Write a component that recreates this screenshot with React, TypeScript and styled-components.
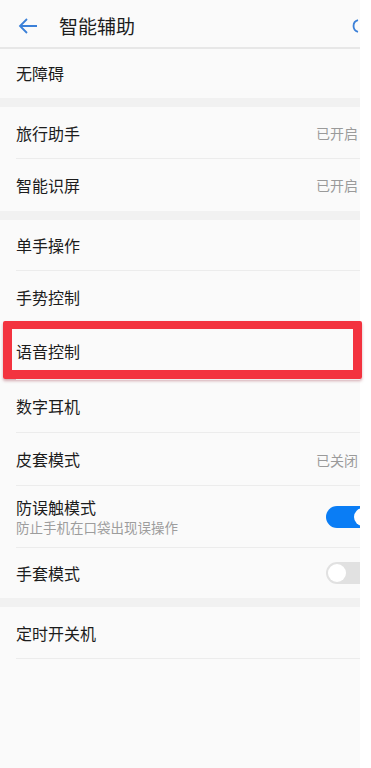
import React from 'react';
import styled, { createGlobalStyle } from 'styled-components';

const GlobalStyle = createGlobalStyle`
  html,
  body {
    margin: 0;
    padding: 0;
    background: #ffffff;
  }

  body {
    font-family: 'Noto Sans CJK SC', 'Noto Sans', sans-serif;
    color: #1c1c1c;
  }
`;

const Screen = styled.div`
  width: 360px;
  min-height: 768px;
  background: #fafafa;
`;

const Header = styled.header`
  display: flex;
  align-items: center;
  height: 43px;
  padding: 4px 0 0 18px;
  border-bottom: 2px solid #e7e7e7;
`;

const BackButton = styled.button`
  display: flex;
  padding: 0;
  border: 0;
  background: none;
  color: #3b80d8;
`;

const Title = styled.h1`
  flex: 1;
  margin: 0 0 0 21px;
  font-size: 19px;
  font-weight: 400;
  color: #1c1c1c;
`;

const Spinner = styled.svg`
  color: #3b80d8;
`;

const Section = styled.section<{ $gap?: number }>`
  & + & {
    border-top: ${({ $gap }) => $gap ?? 10}px solid #f1f1f1;
  }
`;

const Row = styled.div<{ $height?: number; $divider?: boolean }>`
  position: relative;
  display: flex;
  align-items: center;
  justify-content: space-between;
  height: ${({ $height }) => $height ?? 52}px;
  padding: 0 2px 0 16px;

  &::after {
    content: '';
    display: ${({ $divider }) => ($divider ? 'block' : 'none')};
    position: absolute;
    left: 16px;
    right: 0;
    bottom: 0;
    height: 1.5px;
    background: #ececec;
  }
`;

const Texts = styled.div`
  display: flex;
  flex-direction: column;
`;

const Label = styled.span`
  font-size: 16px;
  line-height: 21px;
  color: #1c1c1c;
`;

const Hint = styled.span`
  font-size: 13.5px;
  line-height: 19px;
  color: #9d9d9d;
`;

const Value = styled.span`
  font-size: 14px;
  color: #9a9a9a;
`;

const SwitchSlot = styled.div`
  width: 34px;
  margin-right: -2px;
  overflow: hidden;
  display: flex;
`;

const Switch = styled.div<{ $on?: boolean }>`
  position: relative;
  flex: none;
  width: 48px;
  height: 22px;
  border-radius: 11px;
  background: ${({ $on }) => ($on ? '#0a7df5' : '#e1e1e1')};

  &::after {
    content: '';
    position: absolute;
    top: 2px;
    left: ${({ $on }) => ($on ? '28px' : '2px')};
    width: 18px;
    height: 18px;
    border-radius: 50%;
    background: #ffffff;
  }
`;

const Highlight = styled.div`
  position: absolute;
  top: -2px;
  bottom: 1px;
  left: 3px;
  right: -2px;
  border: 9px solid #f3333f;
  border-top-width: 8px;
  border-radius: 2px;
  box-shadow: 0 2px 3px rgba(140, 20, 40, 0.35);
  pointer-events: none;
`;

type Item = {
  label: string;
  hint?: string;
  value?: string;
  toggle?: boolean;
  on?: boolean;
  height?: number;
  highlight?: boolean;
};

const sections: { gap?: number; last?: boolean; items: Item[] }[] = [
  { items: [{ label: '无障碍', height: 49 }] },
  {
    items: [
      { label: '旅行助手', value: '已开启' },
      { label: '智能识屏', value: '已开启' },
    ],
  },
  {
    gap: 9,
    items: [
      { label: '单手操作', height: 51 },
      { label: '手势控制' },
      { label: '语音控制', height: 57, highlight: true },
      { label: '数字耳机', height: 53 },
      { label: '皮套模式', value: '已关闭', height: 53 },
      { label: '防误触模式', hint: '防止手机在口袋出现误操作', toggle: true, on: true, height: 62 },
      { label: '手套模式', toggle: true, height: 50 },
    ],
  },
  { last: true, items: [{ label: '定时开关机' }] },
];

function ArrowLeft() {
  return (
    <svg width="20" height="16" viewBox="0 0 20 16" fill="none" stroke="currentColor" strokeWidth="1.8">
      <path d="M19 8H2M9 1L2 8l7 7" />
    </svg>
  );
}

export default function App() {
  return (
    <Screen>
      <GlobalStyle />
      <Header>
        <BackButton aria-label="返回">
          <ArrowLeft />
        </BackButton>
        <Title>智能辅助</Title>
        <Spinner width="9" height="16" viewBox="0 0 9 16" fill="none" stroke="currentColor" strokeWidth="1.8">
          <path d="M7 2.2A6 6 0 0 0 7 13.8" />
        </Spinner>
      </Header>
      {sections.map((section, si) => (
        <Section key={si} $gap={section.gap}>
          {section.items.map((item, i) => (
            <Row
              key={item.label}
              $height={item.height}
              $divider={i < section.items.length - 1 || section.last}
            >
              <Texts>
                <Label>{item.label}</Label>
                {item.hint && <Hint>{item.hint}</Hint>}
              </Texts>
              {item.value && <Value>{item.value}</Value>}
              {item.toggle && (
                <SwitchSlot>
                  <Switch $on={item.on} />
                </SwitchSlot>
              )}
              {item.highlight && <Highlight />}
            </Row>
          ))}
        </Section>
      ))}
    </Screen>
  );
}
